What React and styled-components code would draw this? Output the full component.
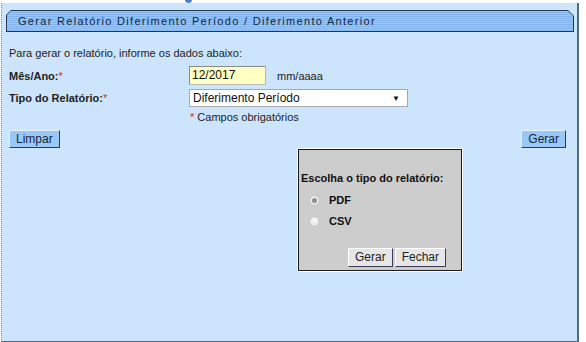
import React from "react";
import styled, { createGlobalStyle } from "styled-components";

const Global = createGlobalStyle`
  html, body { margin: 0; padding: 0; background: #ffffff; }
  body { font-family: "Liberation Sans", Arial, sans-serif; }
  * { box-sizing: border-box; }
`;

const Page = styled.div`
  width: 586px;
  height: 342px;
  overflow: hidden;
`;

const Breadcrumb = styled.div`
  height: 3px;
  overflow: hidden;
  display: flex;
  justify-content: flex-end;
  align-items: flex-end;
  padding-right: 14px;
  gap: 4px;
`;

const Crumb = styled.span`
  font-size: 10px;
  line-height: 12px;
  color: #777;
  white-space: nowrap;
  letter-spacing: 0.3px;
`;

const CrumbDot = styled.span`
  width: 7px;
  height: 7px;
  border-radius: 50%;
  background: #4d7fd0;
  flex: none;
`;

const Panel = styled.div`
  position: relative;
  margin-left: 1px;
  width: 578px;
  height: 339px;
  background: #cce5fc;
  border-left: 1px dotted #8a8a8a;
  border-right: 2px solid #4f6a86;
  border-bottom: 1px solid #4f6a86;
  padding-top: 7px;
`;

const HeaderOuter = styled.div`
  margin: 0 3px 0 4px;
  height: 22px;
  padding: 1px;
  background: #27384c;
  clip-path: polygon(5px 0, calc(100% - 6px) 0, 100% 6px, 100% 100%, 0 100%, 0 5px);
`;

const HeaderInner = styled.div`
  height: 100%;
  display: flex;
  align-items: center;
  padding-left: 11px;
  clip-path: polygon(4px 0, calc(100% - 5px) 0, 100% 5px, 100% 100%, 0 100%, 0 4px);
  background: repeating-linear-gradient(
    180deg,
    #9cc7f3 0px,
    #9cc7f3 1px,
    #82b3ea 1px,
    #82b3ea 2px
  );
  font-size: 11px;
  letter-spacing: 1.3px;
  color: #17263a;
  white-space: nowrap;
`;

const Content = styled.div`
  padding: 14px 11px 0 7px;
  font-size: 11px;
  color: #222;
`;

const Intro = styled.div`
  line-height: 14px;
  margin-bottom: 6px;
`;

const Row = styled.div`
  display: grid;
  grid-template-columns: 180px auto;
  align-items: center;
  margin-bottom: ${(p) => p.$gap ?? 4}px;
`;

const Label = styled.span`
  font-weight: bold;
  color: #222;
`;

const Req = styled.span`
  color: #e01b1b;
  font-weight: normal;
`;

const FieldLine = styled.div`
  display: flex;
  align-items: center;
  gap: 11px;
`;

const DateInput = styled.div`
  width: 77px;
  height: 19px;
  background: #ffffc4;
  border: 1px solid #b8b8b8;
  border-top-color: #8a8a8a;
  border-left-color: #8a8a8a;
  font-size: 12px;
  line-height: 17px;
  padding-left: 2px;
  color: #111;
`;

const Hint = styled.span`
  color: #222;
  font-size: 11px;
`;

const Select = styled.div`
  width: 219px;
  height: 18px;
  background: #fff;
  border: 1px solid #a9a9a9;
  display: flex;
  align-items: center;
  justify-content: space-between;
  padding: 0 7px 0 3px;
  font-size: 12px;
  color: #111;
`;

const Arrow = styled.span`
  font-size: 8px;
  color: #111;
`;

const Note = styled.div`
  grid-column: 2;
  padding-left: 1px;
  line-height: 14px;
`;

const Actions = styled.div`
  display: flex;
  justify-content: space-between;
  margin-top: 6px;
`;

const BlueButton = styled.button`
  height: 18px;
  padding: 0 6px;
  font-family: "Liberation Sans", Arial, sans-serif;
  font-size: 12px;
  color: #1b2533;
  background: #99c8f6;
  border: 1px solid;
  border-color: #e8f2fc #2c3b50 #2c3b50 #e8f2fc;
  line-height: 14px;
`;

const Dialog = styled.div`
  position: absolute;
  left: 296px;
  top: 146px;
  width: 164px;
  height: 122px;
  background: #cdcdcd;
  border: 1px solid #1a1a1a;
  box-shadow: 0 0 0 1px #ffffff;
  padding: 21px 3px 0 2px;
  display: flex;
  flex-direction: column;
  font-size: 11px;
  color: #111;
`;

const DialogTitle = styled.div`
  font-weight: bold;
  line-height: 14px;
  white-space: nowrap;
`;

const Options = styled.div`
  display: flex;
  flex-direction: column;
  gap: 7px;
  padding: 8px 0 0 8px;
`;

const Option = styled.label`
  display: flex;
  align-items: center;
  gap: 9px;
  font-weight: bold;
  line-height: 14px;
`;

const Radio = styled.span`
  width: 11px;
  height: 11px;
  border-radius: 50%;
  border: 1px solid #c4c4c4;
  background: radial-gradient(circle at 50% 40%, #fbfbfb 0%, #e4e4e4 70%, #d6d6d6 100%);
  display: flex;
  align-items: center;
  justify-content: center;
  &::after {
    content: "";
    width: 5px;
    height: 5px;
    border-radius: 50%;
    background: ${(p) => (p.$checked ? "#8f8f8f" : "transparent")};
  }
`;

const DialogButtons = styled.div`
  margin-top: auto;
  margin-bottom: 3px;
  display: flex;
  justify-content: flex-end;
  gap: 2px;
  padding-right: 12px;
`;

const GrayButton = styled.button`
  height: 19px;
  padding: 0 6px;
  font-family: "Liberation Sans", Arial, sans-serif;
  font-size: 12px;
  color: #222;
  background: #e6e6e6;
  border: 1px solid;
  border-color: #ffffff #3c3c5a #3c3c5a #ffffff;
  line-height: 15px;
`;

export default function App() {
  return (
    <Page>
      <Global />
      <Breadcrumb>
        <CrumbDot />
        <Crumb>Sair · Relatórios · Gerencial · Relatório Diferimento / Gerar Diferimento Anterior</Crumb>
      </Breadcrumb>
      <Panel>
        <HeaderOuter>
          <HeaderInner>Gerar Relatório Diferimento Período / Diferimento Anterior</HeaderInner>
        </HeaderOuter>
        <Content>
          <Intro>Para gerar o relatório, informe os dados abaixo:</Intro>
          <Row>
            <Label>
              Mês/Ano:<Req>*</Req>
            </Label>
            <FieldLine>
              <DateInput>12/2017</DateInput>
              <Hint>mm/aaaa</Hint>
            </FieldLine>
          </Row>
          <Row $gap={3}>
            <Label>
              Tipo do Relatório:<Req>*</Req>
            </Label>
            <Select>
              <span>Diferimento Período</span>
              <Arrow>▼</Arrow>
            </Select>
          </Row>
          <Row $gap={0}>
            <Note>
              <Req>*</Req> Campos obrigatórios
            </Note>
          </Row>
          <Actions>
            <BlueButton>Limpar</BlueButton>
            <BlueButton>Gerar</BlueButton>
          </Actions>
        </Content>
        <Dialog>
          <DialogTitle>Escolha o tipo do relatório:</DialogTitle>
          <Options>
            <Option>
              <Radio $checked />
              PDF
            </Option>
            <Option>
              <Radio />
              CSV
            </Option>
          </Options>
          <DialogButtons>
            <GrayButton>Gerar</GrayButton>
            <GrayButton>Fechar</GrayButton>
          </DialogButtons>
        </Dialog>
      </Panel>
    </Page>
  );
}
